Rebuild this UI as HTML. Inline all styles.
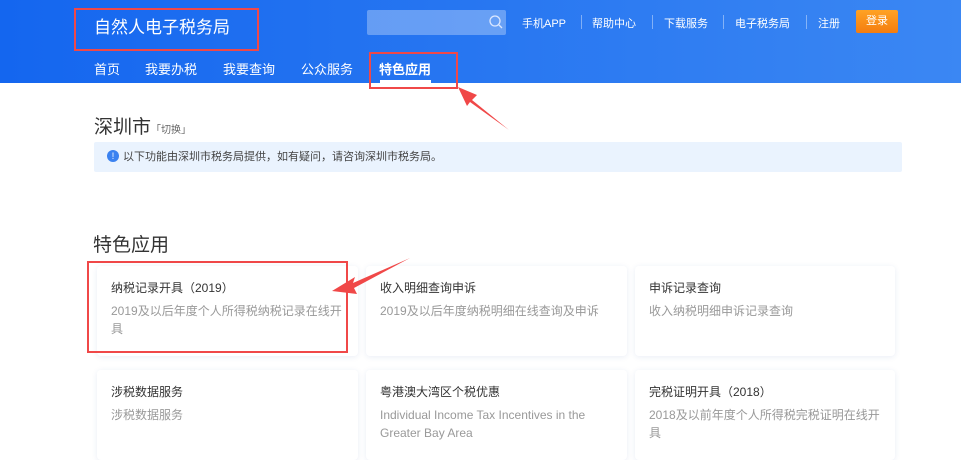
<!DOCTYPE html>
<html><head><meta charset="utf-8"><style>
*{margin:0;padding:0;box-sizing:border-box}
body{width:961px;height:451px;overflow:hidden;background:#fff;font-family:"Liberation Sans","Noto Sans CJK SC",sans-serif;position:relative}
.hd{position:absolute;left:0;top:0;width:961px;height:83px;background:linear-gradient(90deg,#1466ef,#3b87f3)}
.abs{position:absolute;white-space:nowrap}
.t{color:#fff}
.tl{position:absolute;top:15px;color:#fff;font-size:11px}
.sep{position:absolute;top:15px;width:1px;height:14px;background:rgba(255,255,255,.4)}
.nv{position:absolute;top:59px;color:#fff;font-size:13px}
.card{position:absolute;background:#fff;border-radius:4px;box-shadow:0 1px 6px rgba(40,80,160,.1);padding:11px 14px}
.card h4{font-weight:normal;font-size:12px;color:#333;margin-top:2px}
.card p{font-size:12px;color:#999;margin-top:6px;line-height:18px}
.red{position:absolute;border:2px solid #f04848}
</style></head><body>
<div class="hd"></div>
<div class="abs t" style="left:94px;top:13px;font-size:17px">自然人电子税务局</div>
<div class="abs" style="left:367px;top:10px;width:139px;height:25px;background:rgba(255,255,255,.3);border-radius:2px"></div>
<svg class="abs" style="left:488px;top:14px" width="16" height="16"><circle cx="7" cy="7" r="5" fill="none" stroke="#dbe7ff" stroke-width="1.3"/><line x1="11" y1="11" x2="14" y2="14" stroke="#dbe7ff" stroke-width="1.3"/></svg>
<div class="tl" style="left:522px">手机APP</div>
<div class="sep" style="left:581px"></div>
<div class="tl" style="left:592px">帮助中心</div>
<div class="sep" style="left:652px"></div>
<div class="tl" style="left:664px">下载服务</div>
<div class="sep" style="left:723px"></div>
<div class="tl" style="left:735px">电子税务局</div>
<div class="sep" style="left:806px"></div>
<div class="tl" style="left:818px">注册</div>
<div class="abs t" style="left:856px;top:10px;width:42px;height:23px;background:linear-gradient(#ffa224,#f47d10);border-radius:2px;font-size:11px;text-align:center;line-height:23px">登录</div>
<div class="nv" style="left:94px">首页</div>
<div class="nv" style="left:145px">我要办税</div>
<div class="nv" style="left:223px">我要查询</div>
<div class="nv" style="left:301px">公众服务</div>
<div class="nv" style="left:379px;font-weight:bold">特色应用</div>
<div class="abs" style="left:380px;top:80px;width:51px;height:3px;background:#fff"></div>
<div class="red" style="left:74px;top:8px;width:185px;height:43px"></div>
<div class="red" style="left:369px;top:52px;width:89px;height:37px"></div>
<div class="abs" style="left:94px;top:112px;font-size:19px;color:#333">深圳市<span style="font-size:10px;color:#666">「切换」</span></div>
<div class="abs" style="left:94px;top:142px;width:808px;height:30px;background:#eaf3fe;border-radius:2px;font-size:11px;color:#444;line-height:30px;padding-left:29px">以下功能由深圳市税务局提供，如有疑问，请咨询深圳市税务局。</div>
<div class="abs" style="left:107px;top:150px;width:12px;height:12px;border-radius:50%;background:#3b82f0;color:#fff;font-size:9px;text-align:center;line-height:12px">!</div>
<div class="abs" style="left:93px;top:230px;font-size:19px;color:#333">特色应用</div>
<div class="card" style="left:97px;top:266px;width:261px;height:90px"><h4>纳税记录开具（2019）</h4><p>2019及以后年度个人所得税纳税记录在线开具</p></div>
<div class="card" style="left:366px;top:266px;width:261px;height:90px"><h4>收入明细查询申诉</h4><p>2019及以后年度纳税明细在线查询及申诉</p></div>
<div class="card" style="left:635px;top:266px;width:260px;height:90px"><h4>申诉记录查询</h4><p>收入纳税明细申诉记录查询</p></div>
<div class="card" style="left:97px;top:370px;width:261px;height:90px"><h4>涉税数据服务</h4><p>涉税数据服务</p></div>
<div class="card" style="left:366px;top:370px;width:261px;height:90px"><h4>粤港澳大湾区个税优惠</h4><p>Individual Income Tax Incentives in the Greater Bay Area</p></div>
<div class="card" style="left:635px;top:370px;width:260px;height:90px"><h4>完税证明开具（2018）</h4><p>2018及以前年度个人所得税完税证明在线开具</p></div>
<div class="red" style="left:87px;top:261px;width:261px;height:92px"></div>
<svg class="abs" style="left:0;top:0" width="961" height="451">
<path d="M509 130 L472 100 L477 95 L458 87 L467 106 L470 102 Z" fill="#f04848"/>
<path d="M410 258 L353 283 L355 277 L332 291 L357 294 L354 288 Z" fill="#f04848"/>
</svg>
</body></html>
